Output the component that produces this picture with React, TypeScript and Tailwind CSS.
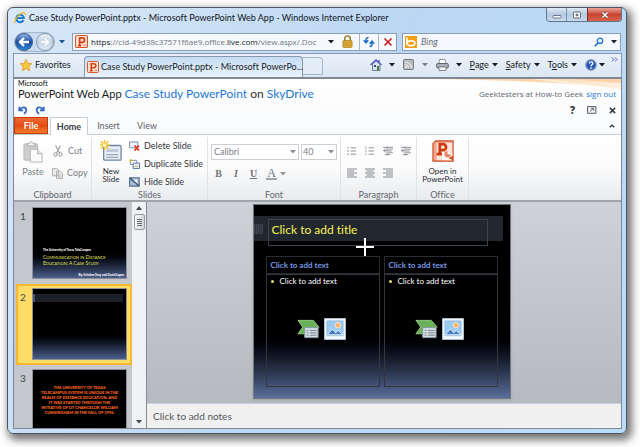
import type { ReactNode } from "react";
import clsx from "clsx";

function Caret({ className }: { className?: string }) {
  return (
    <svg viewBox="0 0 6 4" className={clsx("h-[4px] w-[6px] shrink-0", className)} aria-hidden="true">
      <path d="M0 0h6L3 3.6z" fill="currentColor" />
    </svg>
  );
}

function PptIcon({ className }: { className?: string }) {
  return (
    <svg viewBox="0 0 24 24" className={clsx("shrink-0", className)} aria-hidden="true">
      <rect x="1" y="1" width="22" height="22" rx="2" fill="#fbe3d8" stroke="#d9562b" strokeWidth="2" />
      <path d="M9 5.500h4.500a4 4 0 0 1 0 8H9M8.500 4v16M5.500 19.500h6" fill="none" stroke="#d2400f" strokeWidth="3.200" />
      <path d="M15 17h5v4h-5z" fill="#f1a27f" />
    </svg>
  );
}

function IeIcon() {
  return (
    <svg viewBox="0 0 24 24" className="size-[12px] shrink-0" aria-hidden="true">
      <path d="M19 16a7.500 7.500 0 1 1 .6-4H6" fill="none" stroke="#1e7fd0" strokeWidth="4.200" />
      <path d="M3 22C-1 19 6 8 14 3c5-3 10-2 8 3" fill="none" stroke="#f2b31c" strokeWidth="2.400" />
    </svg>
  );
}

function TitleBar() {
  return (
    <div className="flex h-[23px] items-start justify-between pr-[4px] pl-[6px]">
      <div className="flex items-center gap-[3px] pt-[4px]">
        <IeIcon />
        <h1 className="text-[9px] leading-[12px] whitespace-nowrap text-[#10151c]">
          Case Study PowerPoint.pptx - Microsoft PowerPoint Web App - Windows Internet Explorer
        </h1>
      </div>
      <div className="flex h-[14px] overflow-hidden rounded-b border border-t-0 border-[#63738a]">
        <button aria-label="Minimize" className="flex w-[20px] items-center justify-center border-r border-[#7b8ba2] bg-linear-to-b from-[#dfeaf6] via-[#b5c9df] to-[#c8dbee]">
          <svg viewBox="0 0 10 8" className="h-[8px] w-[10px]"><rect x="1" y="4.500" width="8" height="2.500" rx=".8" fill="#fff" stroke="#535d70" strokeWidth=".8" /></svg>
        </button>
        <button aria-label="Maximize" className="flex w-[20px] items-center justify-center bg-linear-to-b from-[#dfeaf6] via-[#b5c9df] to-[#c8dbee]">
          <svg viewBox="0 0 10 8" className="h-[8px] w-[10px]"><rect x="1.500" y="1" width="7" height="6" rx=".6" fill="#fff" stroke="#535d70" strokeWidth=".9" /><path d="M4 3.200h2v1.600H4z" fill="#8fa5c0" stroke="#535d70" strokeWidth=".8" /></svg>
        </button>
        <button aria-label="Close" className="flex w-[34px] items-center justify-center border-l border-[#7a2b22] bg-linear-to-b from-[#e9a396] via-[#c8432f] to-[#d9644b]">
          <svg viewBox="0 0 10 8" className="h-[8px] w-[10px]"><path d="m2.500 1.500 5 5m0-5-5 5" stroke="#6b3a3a" strokeWidth="2.800" /><path d="m2.500 1.500 5 5m0-5-5 5" stroke="#fff" strokeWidth="1.600" /></svg>
        </button>
      </div>
    </div>
  );
}

function NavBar() {
  return (
    <div className="flex h-[22px] items-center pr-[5px] pb-[1px] pl-[6px]">
      <div className="flex items-center rounded-full border border-[#a3b8d0] bg-[#c9dbee]">
        <button aria-label="Back" className="flex size-[18px] items-center justify-center rounded-full border border-[#33558f] bg-linear-to-b from-[#8db6e4] via-[#1e4c9e] to-[#2e8ad8]">
          <svg viewBox="0 0 12 12" className="size-[12px]"><path d="M11 6H2m4-4L2 6l4 4" fill="none" stroke="#fff" strokeWidth="2.400" /></svg>
        </button>
        <button aria-label="Forward" className="ml-[3px] flex size-[18px] items-center justify-center rounded-full border border-[#8395ab] bg-linear-to-b from-[#eef4fa] via-[#c2d2e3] to-[#e2ecf6]">
          <svg viewBox="0 0 12 12" className="size-[10px]"><path d="M1 6h9M6 2l4 4-4 4" fill="none" stroke="#f4f8fc" strokeWidth="2.200" /></svg>
        </button>
      </div>
      <button aria-label="Recent pages" className="mr-[7px] ml-[4px] text-[#1d568f]"><Caret /></button>
      <div className="flex h-[18px] min-w-0 flex-[326] items-center border border-[#8c9eb4] bg-[#f5f9fd]">
        <PptIcon className="mx-[2px] size-[13px]" />
        <a href="#address" className="ml-[1px] flex-1 overflow-hidden font-['Open_Sans',sans-serif] text-[8px] leading-[14px] whitespace-nowrap text-[#6f757c]">
          <span className="text-[#15191e]">https</span>://cid-49d38c37571f6ae9.office.<span className="text-[#15191e]">live.com</span>/view.aspx/.Doc
        </a>
        <button aria-label="Address history" className="ml-[3px]"><Caret /></button>
        <svg viewBox="0 0 12 14" className="mr-[6px] ml-[8px] h-[13px] w-[11px] shrink-0">
          <path d="M3 7V4a3 3 0 0 1 6 0v3" fill="none" stroke="#a1812e" strokeWidth="1.800" />
          <rect x="1" y="6" width="10" height="7.500" rx="1" fill="#e0ac35" stroke="#a47c1f" strokeWidth=".8" />
          <path d="M1.500 8.500h9M1.500 11h9" stroke="#b98b22" strokeWidth=".8" />
        </svg>
        <button aria-label="Refresh" className="flex h-full w-[19px] shrink-0 items-center justify-center border-l border-[#a8b7c8]">
          <svg viewBox="0 0 12 12" className="size-[12px]"><path d="M5.500 1.500C3 1.500 3 3 3 6M.8 4.200 3 6.800l2.200-2.600M6.500 10.500C9 10.500 9 9 9 6M6.800 7.800 9 5.200l2.200 2.600" fill="none" stroke="#1c6fc4" strokeWidth="1.500" /></svg>
        </button>
        <button aria-label="Stop" className="flex h-full w-[18px] shrink-0 items-center justify-center border-l border-[#a8b7c8]">
          <svg viewBox="0 0 10 10" className="size-[10px]"><path d="m1.500 1.500 7 7m0-7-7 7" stroke="#cd2422" strokeWidth="1.700" /></svg>
        </button>
      </div>
      <form className="ml-[5px] flex h-[18px] min-w-0 flex-[219] items-center border border-[#8c9eb4] bg-[#f5f9fd]">
        <svg viewBox="0 0 12 12" className="ml-[2px] size-[12px] shrink-0" aria-hidden="true">
          <path d="M0 0h12v12H0z" fill="#f7a11a" />
          <path d="M2 1.500v6.500" stroke="#fff" strokeWidth="1.600" />
          <ellipse cx="6" cy="7.300" rx="3.900" ry="2.500" fill="none" stroke="#fff" strokeWidth="1.600" />
        </svg>
        <input aria-label="Search Bing" placeholder="Bing" className="ml-[4px] w-0 flex-1 bg-transparent text-[9px] italic outline-none placeholder:text-[#66696e]" />
        <button type="button" aria-label="Search">
          <svg viewBox="0 0 10 10" className="size-[10px]"><circle cx="6" cy="3.800" r="2.700" fill="#e5f1fb" stroke="#2577c4" strokeWidth="1.300" /><path d="M4 6 .8 9.200" stroke="#2577c4" strokeWidth="1.700" /></svg>
        </button>
        <button type="button" aria-label="Search options" className="mr-[3px] ml-[7px]"><Caret /></button>
      </form>
    </div>
  );
}

function MenuButton({ first, rest }: { first: ReactNode; rest?: string }) {
  return (
    <button className="flex items-center gap-[3px] text-[9px] leading-[12px]">
      <span>{first}{rest}</span>
      <Caret />
    </button>
  );
}

function FavoritesBar() {
  return (
    <div className="mr-[4px] ml-[5px] flex h-[24px] border border-b-0 border-[#8698ae] bg-linear-to-b from-[#eaf1fa] to-[#dbe6f4] text-[#171c24]">
      <button className="flex w-[70px] shrink-0 items-center gap-[3px] pb-[1px] pl-[6px] text-[9px]">
        <svg viewBox="0 0 24 24" className="size-[12px] shrink-0"><path d="m12 1 3.400 7.600 8.100.9-6 5.600 1.600 8.200L12 19.200 4.900 23.300l1.600-8.200-6-5.600 8.100-.9z" fill="#fcc63c" stroke="#d78b13" strokeWidth="1.400" /></svg>
        Favorites
      </button>
      <button className="mt-[2px] flex h-[21px] w-[219px] shrink-0 items-center gap-[2px] rounded-t border border-b-0 border-[#8698ae] bg-linear-to-b from-[#c5dcf5] to-[#eaf2fb] pb-[1px] pl-[2px] text-[9px] whitespace-nowrap">
        <PptIcon className="size-[12px]" />
        Case Study PowerPoint.pptx - Microsoft PowerPo...
      </button>
      <button aria-label="New tab" className="mt-[3px] h-[18px] w-[20px] shrink-0 rounded-tr border border-l-0 border-[#a5b5c9] bg-[#e3edf8]" />
      <div className="ml-auto flex items-center gap-[8px] pr-[3px] pb-[2px]">
        <button aria-label="Home page" className="flex items-center gap-[7px]">
          <svg viewBox="0 0 12 12" className="size-[12px]"><path d="M2.500 5v6.500h7.500V5L6.200 1.800z" fill="#d9e5f1" stroke="#53667f" strokeWidth=".8" /><path d="M.5 6 6 1l5.500 5M9 1v3" fill="none" stroke="#5c5bc5" strokeWidth="1.500" /><path d="M4 6h2v2H4z" fill="#304e80" /><path d="M7 7h2v4.500H7z" fill="#467b36" /></svg>
          <Caret />
        </button>
        <button aria-label="Feeds" className="flex items-center gap-[8px]">
          <svg viewBox="0 0 11 11" className="size-[11px]"><rect x=".5" y=".5" width="10" height="10" rx="1" fill="#b6b9bd" stroke="#777b80" /><path d="M2.500 5.500a3.500 3.500 0 0 1 3.200 3.200M2.500 3a6 6 0 0 1 6 6" fill="none" stroke="#fff" /><circle cx="3" cy="8" r=".9" fill="#fff" /></svg>
          <Caret className="text-[#7d838a]" />
        </button>
        <button aria-label="Print" className="flex items-center gap-[7px]">
          <svg viewBox="0 0 13 12" className="h-[12px] w-[13px]"><path d="M3.500.5H9l1 4.500H3z" fill="#fff" stroke="#7c8289" strokeWidth=".8" /><rect x=".7" y="4.500" width="11.600" height="4.500" rx="1" fill="#a8aeb5" stroke="#555b63" strokeWidth=".9" /><path d="M3 8h7v3.500H3z" fill="#f6f8fa" stroke="#666c73" strokeWidth=".8" /></svg>
          <Caret />
        </button>
        <MenuButton first={<u>P</u>} rest="age" />
        <MenuButton first={<u>S</u>} rest="afety" />
        <MenuButton first={<>T<u>o</u></>} rest="ols" />
        <button aria-label="Help" className="flex items-center gap-[2px]">
          <svg viewBox="0 0 12 12" className="size-[12px]"><circle cx="6" cy="6" r="5.300" fill="#2a55b5" stroke="#8fa3bf" strokeWidth="1.200" /><path d="M4.300 4.600c0-2.300 3.500-2.300 3.500-.2C7.800 5.700 6 5.700 6 7.300M6 8.300v1.500" fill="none" stroke="#fff" strokeWidth="1.400" /></svg>
          <Caret />
        </button>
        <button aria-label="More commands" className="-ml-[2px] self-start pt-[3px]">
          <svg viewBox="0 0 7 5" className="h-[5px] w-[7px]"><path d="m.8.500 2 2-2 2M4 .5l2 2-2 2" fill="none" stroke="#5a55c4" strokeWidth="1" /></svg>
        </button>
      </div>
    </div>
  );
}

function HeaderSwoosh() {
  return (
    <svg viewBox="0 0 200 12" className="absolute top-0 right-0 h-[12px] w-[200px]" aria-hidden="true">
      <defs>
        <linearGradient id="swoosh" x1="0" x2="1">
          <stop offset="0" stopColor="#f9c48a" stopOpacity=".5" />
          <stop offset=".55" stopColor="#fbd5a9" />
          <stop offset="1" stopColor="#fdf0e2" />
        </linearGradient>
      </defs>
      <path d="M0 0h200v11C150 3 80 1 0 0z" fill="url(#swoosh)" />
      <path d="M110 0h14c24 3 50 6 76 10v2C170 7 140 3 110 0z" fill="#fff" opacity=".55" />
      <path d="M150 0h50v4c-18-1-34-2-50-4z" fill="#f9c795" opacity=".7" />
    </svg>
  );
}

function AppHeader() {
  return (
    <header className="relative flex bg-linear-to-b from-white to-[#fafbfc]">
      <HeaderSwoosh />
      <div className="flex-1 pt-[1px] pl-[4px]">
        <div className="text-[7px] leading-[7px] text-black">Microsoft</div>
        <div className="flex items-baseline gap-[3px] leading-[14px] whitespace-nowrap">
          <span className="text-[11px] text-[#1b1b1b]">PowerPoint Web App</span>
          <span className="text-[12px] text-[#333]">
            <a href="#file" className="text-[#1e78d2]">Case Study PowerPoint</a> on{" "}
            <a href="#skydrive" className="text-[#1e78d2]">SkyDrive</a>
          </span>
        </div>
        <div className="flex gap-[7px] pt-[4px] pb-[2px] text-[#2f66c4]">
          <button aria-label="Undo">
            <svg viewBox="0 0 12 12" className="size-[10px]"><path d="M1.500 2v4.500H6M2 6c2.500-4.500 8-4 8 0 0 2-1.200 3.500-3 4.500" fill="none" stroke="currentColor" strokeWidth="2" /></svg>
          </button>
          <button aria-label="Redo">
            <svg viewBox="0 0 12 12" className="size-[10px]"><path d="M10.500 2v4.500H6M10 6C7.500 1.500 2 2 2 6c0 2 1.200 3.500 3 4.500" fill="none" stroke="currentColor" strokeWidth="2" /></svg>
          </button>
        </div>
      </div>
      <div className="relative flex flex-col items-end pt-[9px] pr-[5px] font-['Open_Sans',sans-serif] text-[8px] leading-[12px] whitespace-nowrap text-[#62666d]">
        <div>
          Geektesters at How-to Geek <a href="#signout" className="ml-[1px] text-[#1e78d2]">sign out</a>
        </div>
        <div className="flex items-center gap-[12px] pt-[4px] text-[#3d4044]">
          <button aria-label="Help" className="text-[10px] font-black">?</button>
          <button aria-label="Pop out">
            <svg viewBox="0 0 10 8" className="h-[8px] w-[10px]"><path d="M.6.600h8.300v6.700H.6z" fill="#f4f4f4" stroke="#55595e" strokeWidth="1" /><path d="m3 5.500 3.300-3M4 2.300h2.600v2.400" fill="none" stroke="#55595e" strokeWidth=".9" /></svg>
          </button>
          <button aria-label="Close file">
            <svg viewBox="0 0 8 8" className="size-[7px]"><path d="m1 1 6 6m0-6L1 7" stroke="currentColor" strokeWidth="1.800" /></svg>
          </button>
        </div>
      </div>
    </header>
  );
}

function RibbonTabs() {
  return (
    <nav className="flex h-[18px] items-stretch border-b border-[#c9ccd1] bg-[#fafbfc] text-[9px] text-[#5d6168]">
      <button className="w-[34px] border border-[#c33b0b] bg-linear-to-b from-[#ee6a33] via-[#e44a10] to-[#f27a28] font-bold text-white">File</button>
      <button className="-mb-px ml-[2px] w-[38px] border border-b-0 border-[#c9ccd1] bg-white font-bold text-[#3b3e43]">Home</button>
      <button className="ml-[4px] w-[33px]">Insert</button>
      <button className="ml-[3px] w-[38px]">View</button>
      <button aria-label="Collapse ribbon" className="mr-[6px] ml-auto text-[#3d4044]">
        <svg viewBox="0 0 6 4" className="h-[4px] w-[6px]"><path d="m.7 3.300 2.300-2 2.300 2" fill="none" stroke="currentColor" strokeWidth="1.400" /></svg>
      </button>
    </nav>
  );
}

function Group({ label, className, children }: { label: string; className: string; children: ReactNode }) {
  return (
    <section aria-label={label} className={clsx("flex shrink-0 flex-col border-r border-[#e0e2e5]", className)}>
      <div className="flex-1">{children}</div>
      <div className="text-center text-[9px] leading-[10px] text-[#63676e]">{label}</div>
    </section>
  );
}

function SmallCommand({ icon, label, muted }: { icon: ReactNode; label: string; muted?: boolean }) {
  return (
    <button className={clsx("flex items-center gap-[4px] text-[9px] leading-[12px] whitespace-nowrap", muted ? "text-[#7b7f85]" : "text-[#34373c]")}>
      {icon}
      {label}
    </button>
  );
}

const alignments = [
  { name: "Align left", d: "M0 1h10M0 3h7M0 5h10M0 7h7M0 9h10" },
  { name: "Center", d: "M0 1h10M1.500 3h7M0 5h10M1.500 7h7M0 9h10" },
  { name: "Align right", d: "M0 1h10M3 3h7M0 5h10M3 7h7M0 9h10" },
];

const lists = [
  { name: "Bullets", d: "M0 1.500h2M0 5h2M0 8.500h2M4 1.500h6M4 5h6M4 8.500h6" },
  { name: "Numbering", d: "M1 .2v2.500M0 5h1.700M0 8.500h1.700M4 1.500h6M4 5h6M4 8.500h6" },
  { name: "Decrease indent", d: "M0 1h11M5.500 3h5.500M5.500 5h4M5.500 7h5.500M2 9h6M0 4.500h4M2 2.500v4M4.500 0v10" },
  { name: "Increase indent", d: "M0 1h11M5.500 3h5.500M5.500 5h4M5.500 7h5.500M2 9h6M0 4.500h4M2 2.500v4M4.500 0v10" },
];

function Ribbon() {
  return (
    <div className="flex h-[65px] shrink-0 bg-linear-to-b from-white via-[#fbfbfc] to-[#e9ebee] pt-[2px]">
      <Group label="Clipboard" className="w-[78px]">
        <div className="flex pt-[4px] pl-[7px]">
          <button className="flex w-[24px] flex-col items-center text-[9px] leading-[11px] text-[#7b7f85]">
            <svg viewBox="0 0 22 24" className="h-[22px] w-[20px]">
              <rect x="1" y="3" width="15" height="18" rx="1.500" fill="#cdcdcd" stroke="#b5b5b5" />
              <path d="M5 4.500V3l2-.5C7 0 11 0 11 2.500l2 .5v2.500H5z" fill="#eee" stroke="#a7a7a7" />
              <path d="M8 9h8l5 5v9H8z" fill="#fafafa" stroke="#b2b2b2" /><path d="M16 9v5h5" fill="#ddd" stroke="#b2b2b2" />
            </svg>
            <span className="pt-[3px]">Paste</span>
          </button>
          <div className="flex flex-col gap-[10px] pt-[4px] pl-[7px]">
            <SmallCommand muted label="Cut" icon={<svg viewBox="0 0 12 12" className="size-[12px]"><path d="m3.500.5 4 7.500M8.500.5l-4 7.500" stroke="#a6a6a6" strokeWidth="1.300" /><circle cx="3.500" cy="9.500" r="1.700" fill="none" stroke="#929292" /><circle cx="8.500" cy="9.500" r="1.700" fill="none" stroke="#929292" /></svg>} />
            <SmallCommand muted label="Copy" icon={<svg viewBox="0 0 12 12" className="size-[11px]"><path d="M.5.500h4.500l2 2v6H.5zM5 3.500h4l2.500 2.500v5.500H5z" fill="#ececec" stroke="#a8a8a8" /><path d="M6.500 7.500h3.500M6.500 9.500h3.500" stroke="#b5b5b5" /></svg>} />
          </div>
        </div>
      </Group>
      <Group label="Slides" className="w-[116px]">
        <div className="flex pt-[3px] pl-[6px]">
          <button className="flex w-[26px] flex-col items-center text-[8px] leading-[8px] text-[#2b2e33]">
            <svg viewBox="0 0 24 24" className="h-[22px] w-[22px]">
              <rect x="4" y="6" width="19" height="16" rx="1" fill="#e7edf5" stroke="#72859e" strokeWidth="1.400" />
              <path d="M7 10h13v3H7z" fill="#bdc8d7" /><path d="M7 16h13M7 19h13" stroke="#9aa9bd" strokeWidth="1.200" />
              <path d="M5 0v11M0 5.500h11M1 1.500l8 8M9 1.500l-8 8" stroke="#efc42d" strokeWidth="1.600" /><circle cx="5" cy="5.500" r="2" fill="#fff8c0" />
            </svg>
            <span className="mt-[5px] block">New</span>
            <span className="block">Slide</span>
          </button>
          <div className="flex flex-col gap-[6px] pl-[5px]">
            <SmallCommand label="Delete Slide" icon={<svg viewBox="0 0 12 11" className="h-[10px] w-[11px]"><path d="M.6 1h9v6.500h-9z" fill="#edf2fa" stroke="#7189ae" /><path d="m6 5 5 5.500M11 5l-5 5.500" stroke="#dc3a25" strokeWidth="1.900" /></svg>} />
            <SmallCommand label="Duplicate Slide" icon={<svg viewBox="0 0 12 11" className="h-[10px] w-[11px]"><path d="M1.500 1.500h7V6h-7z" fill="#fff" stroke="#7189ae" /><path d="M4.500 4.500h7v6h-7z" fill="#e5ecf6" stroke="#526f9b" /><path d="M0 1.500h4M2 0v4M6 8h4" stroke="#ddb22d" /></svg>} />
            <SmallCommand label="Hide Slide" icon={<svg viewBox="0 0 12 11" className="h-[10px] w-[11px]"><path d="M.7.800h10.500v9.200H.7z" fill="#aabcd2" stroke="#536e90" strokeWidth="1.200" /><path d="M4 3h5v5H7z" fill="#f4f7fb" /><path d="m1 1 10 9" stroke="#314d74" strokeWidth="1.500" /></svg>} />
          </div>
        </div>
      </Group>
      <Group label="Font" className="w-[133px]">
        <div className="flex gap-[2px] pt-[7px] pl-[3px] text-[#888c92]">
          <span className="relative flex">
            <select aria-label="Font" className="h-[16px] w-[88px] appearance-none border border-[#cdd0d4] bg-white pl-[2px] text-[9px] text-[#7c8087]"><option>Calibri</option></select>
            <Caret className="pointer-events-none absolute top-[6px] right-[3px]" />
          </span>
          <span className="relative flex">
            <select aria-label="Font size" className="h-[16px] w-[36px] appearance-none border border-[#cdd0d4] bg-white pl-[1px] text-[9px] text-[#7c8087]"><option>40</option></select>
            <Caret className="pointer-events-none absolute top-[6px] right-[3px]" />
          </span>
        </div>
        <div className="flex items-center pt-[8px] pl-[2px] font-['Liberation_Serif',serif] text-[10px] leading-[12px] text-[#707378]">
          <button aria-label="Bold" className="w-[17px] font-bold">B</button>
          <button aria-label="Italic" className="w-[18px] font-bold italic">I</button>
          <button aria-label="Underline" className="w-[17px] font-bold underline">U</button>
          <button aria-label="Font color" className="flex items-center gap-[3px] pl-[4px]">
            <span className="w-[11px] border-b-2 border-[#a0a2a5] text-[12px] leading-[10px]">A</span>
            <Caret className="text-[#95989c]" />
          </button>
        </div>
      </Group>
      <Group label="Paragraph" className="w-[76px]">
        <div className="flex gap-[8px] pt-[9px] pl-[6px] text-[#929599]">
          {lists.map((item) => (
            <button key={item.name} aria-label={item.name}>
              <svg viewBox="0 0 11 10" className="h-[10px] w-[10px]"><path d={item.d} stroke="currentColor" strokeWidth="1.100" /></svg>
            </button>
          ))}
        </div>
        <div className="flex gap-[8px] pt-[12px] pl-[6px] text-[#85888c]">
          {alignments.map((item) => (
            <button key={item.name} aria-label={item.name}>
              <svg viewBox="0 0 10 10" className="h-[10px] w-[10px]"><path d={item.d} stroke="currentColor" strokeWidth="1.100" /></svg>
            </button>
          ))}
        </div>
      </Group>
      <Group label="Office" className="w-[52px]">
        <button className="flex w-full flex-col items-center pt-[3px] text-[8px] leading-[8px] text-[#2b2e33]">
          <svg viewBox="0 0 24 24" className="size-[22px]">
            <path d="M4 1h19v22H1V4z" fill="#f3a489" stroke="#c94b24" strokeWidth="1.200" />
            <path d="M5 3h17v19H5z" fill="#fbe5dc" />
            <path d="M8 4.500h4a3.300 3.300 0 0 1 0 6.600H8.500M8.500 3v13M5 15.500h6" fill="none" stroke="#cf3c10" strokeWidth="3" />
            <path d="M11 14h11v8H11z" fill="#fff" /><circle cx="17" cy="15.500" r="3.500" fill="#f0866a" /><path d="M17 15.500V12a3.500 3.500 0 0 1 3.500 3.500z" fill="#fff" /><path d="m18 20 5-3v5z" fill="#d84b1b" />
          </svg>
          <span className="mt-[5px] block">Open in</span>
          <span className="block">PowerPoint</span>
        </button>
      </Group>
    </div>
  );
}

function Thumb({ index, selected, children }: { index: number; selected?: boolean; children?: ReactNode }) {
  return (
    <li>
      <button
        aria-label={`Slide ${index}`}
        className={clsx("flex w-full border-2 pt-[2px] pb-[3px] pl-[2px] text-left", selected ? "border-[#f5b82e] bg-[#ffdb67]" : "border-transparent")}
      >
        <span className="w-[12px] shrink-0 pt-[3px] text-[10px] leading-[12px] text-[#41454b]">{index}</span>
        <span className="block h-[72px] w-[95px] shrink-0 border border-[#8d9096] bg-linear-to-b from-black from-60% to-[#4c5f8c]">
          {children}
        </span>
      </button>
    </li>
  );
}

function SlidePanel() {
  return (
    <aside className="flex w-[133px] shrink-0 overflow-hidden border-r border-[#85898f] bg-[#c4c8cd]">
      <ol className="w-[118px] pt-[1px] pl-[2px]">
        <Thumb index={1}>
          <span className="block pt-[40px] pl-[10px] text-[3px] leading-[5px] font-black text-white">The University of Texas TeleCampus</span>
          <span className="block pt-[1px] pl-[10px] text-[5px] leading-[6px] text-[#e3e54c] [font-variant:small-caps]">Communication in Distance<br />Education: A Case Study</span>
          <span className="block pt-[7px] pr-[2px] text-right text-[3px] leading-[5px] font-black text-white">By: Kristine Gray and David Lopez</span>
        </Thumb>
        <Thumb index={2} selected>
          <span className="mt-[5px] mr-[3px] block h-[8px] border-l-2 border-[#4b5466] bg-[#1c2029]" />
        </Thumb>
        <Thumb index={3}>
          <span className="block h-full bg-black pt-[15px] text-center text-[4px] leading-[5px] font-black whitespace-nowrap text-[#ff6a22]">
            THE UNIVERSITY OF TEXAS<br />TELECAMPUS SYSTEM IS UNIQUE IN THE<br />REALM OF DISTANCE EDUCATION, AND<br />IT WAS STARTED THROUGH THE<br />INITIATIVE OF UT CHANCELOR WILLIAM<br />CUNNINGHAM IN THE FALL OF 1996.
          </span>
        </Thumb>
      </ol>
      <div className="flex flex-1 flex-col items-center bg-[#f0f1f2] py-[4px] text-[#45484c]">
        <svg viewBox="0 0 6 4" className="h-[4px] w-[6px]"><path d="M0 4h6L3 0z" fill="currentColor" /></svg>
        <div className="mt-[4px] flex h-[16px] w-[11px] flex-col justify-center gap-[1px] rounded-xs border border-[#999da2] bg-linear-to-r from-[#fafafa] to-[#d3d5d8] px-[2px]">
          <span className="h-px bg-[#686c71]" />
          <span className="h-px bg-[#686c71]" />
          <span className="h-px bg-[#686c71]" />
          <span className="h-px bg-[#686c71]" />
        </div>
        <Caret className="mt-auto" />
      </div>
    </aside>
  );
}

function ContentPlaceholder() {
  return (
    <div className="flex-1">
      <div className="h-[18px] border border-[#282b30] pl-[4px] text-[8px] leading-[17px] font-bold text-[#7898e4]">Click to add text</div>
      <div className="h-[113px] border border-[#33363c]">
        <div className="flex items-center pl-[4px] text-[8px] leading-[12px] text-white">
          <span className="mr-[6px] size-[3px] rounded-full bg-[#e3e36a]" />
          Click to add text
        </div>
        <div className="flex items-center justify-center gap-[4px] pt-[31px] pr-[2px]">
          <button aria-label="Insert SmartArt">
            <svg viewBox="0 0 24 20" className="h-[20px] w-[23px]">
              <path d="M1 1h16l6 7-6 7H1l5-7z" fill="#67b158" stroke="#9bcd86" />
              <path d="M8 8.500h14V19H8z" fill="#d5dce2" stroke="#8796a3" />
              <path d="M10 11.500h2M10 14h2M10 16.500h2M13.500 11.500h7M13.500 14h7M13.500 16.500h7" stroke="#75828f" />
            </svg>
          </button>
          <button aria-label="Insert picture">
            <svg viewBox="0 0 23 23" className="size-[22px]">
              <path d="M.5.500h22v22H.5z" fill="#f4f8fb" stroke="#a9bfd5" />
              <path d="M3 3h17v15.500H3z" fill="#9bcbf1" stroke="#7ba7cf" strokeWidth=".6" />
              <circle cx="14.500" cy="7.500" r="2.800" fill="#ffb26a" stroke="#fbe6cc" />
              <path d="m3.300 17.500 5.500-6 3.500 4 2.500-2.500 5 4.500z" fill="#4a7dbd" stroke="#eef6fc" strokeWidth=".9" />
            </svg>
          </button>
        </div>
      </div>
    </div>
  );
}

function SlideCanvas() {
  return (
    <main className="flex min-w-0 flex-1 flex-col">
      <div className="flex flex-1 items-start justify-center bg-linear-to-b from-[#ced2d6] to-[#b6babf] pt-[2px] pr-[5px]">
        <div className="relative h-[195px] w-[258px] border border-[#74777d] bg-linear-to-b from-black from-65% to-[#5a6f9d] pt-[11px] shadow-sm">
          <div className="mr-[7px] flex h-[25px] bg-[#22262f]">
            <span className="mt-[8px] h-[10px] w-[9px] bg-[repeating-linear-gradient(90deg,#3d4350_0_1px,#2e333e_1px_2px)]" />
            <div className="mt-[3px] ml-[5px] h-[27px] w-[220px] border border-[#3f434b] pl-[3px] text-[12px] leading-[19px] text-[#f4f450]">Click to add title</div>
          </div>
          <div className="mr-[12px] ml-[12px] flex gap-[4px] pt-[15px]">
            <ContentPlaceholder />
            <ContentPlaceholder />
          </div>
          <svg viewBox="0 0 18 18" className="absolute top-[33px] left-[102px] size-[18px]" aria-hidden="true">
            <path d="M9 0v18M0 9h18" stroke="#fff" strokeWidth="2" />
          </svg>
        </div>
      </div>
      <input aria-label="Notes" placeholder="Click to add notes" className="h-[25px] border-t border-[#c3d3e4] bg-[#f0f0f0] pl-[6px] text-[10px] outline-none placeholder:text-[#53575c]" />
    </main>
  );
}

export default function App() {
  return (
    <div className="h-screen bg-white pt-[7px] pr-[13px] pb-[13px] pl-[7px] font-[Lato,'Open_Sans',sans-serif] text-[#1b1e22] [font-variant-ligatures:none]">
      <div className="flex h-full flex-col rounded-md border border-[#4c5663] bg-linear-115 from-[#d9e8f8] via-[#bcd7f3] to-[#b9dcfb] pb-[4px] shadow-[3px_4px_9px_2px_rgba(0,0,0,0.55)]">
        <TitleBar />
        <NavBar />
        <FavoritesBar />
        <div className="mr-[4px] ml-[5px] flex min-h-0 flex-1 flex-col overflow-hidden border border-t-2 border-[#7f8894] bg-white">
          <AppHeader />
          <RibbonTabs />
          <Ribbon />
          <div className="flex min-h-0 flex-1 border-t-2 border-[#9fa4aa]">
            <SlidePanel />
            <SlideCanvas />
          </div>
        </div>
      </div>
    </div>
  );
}
